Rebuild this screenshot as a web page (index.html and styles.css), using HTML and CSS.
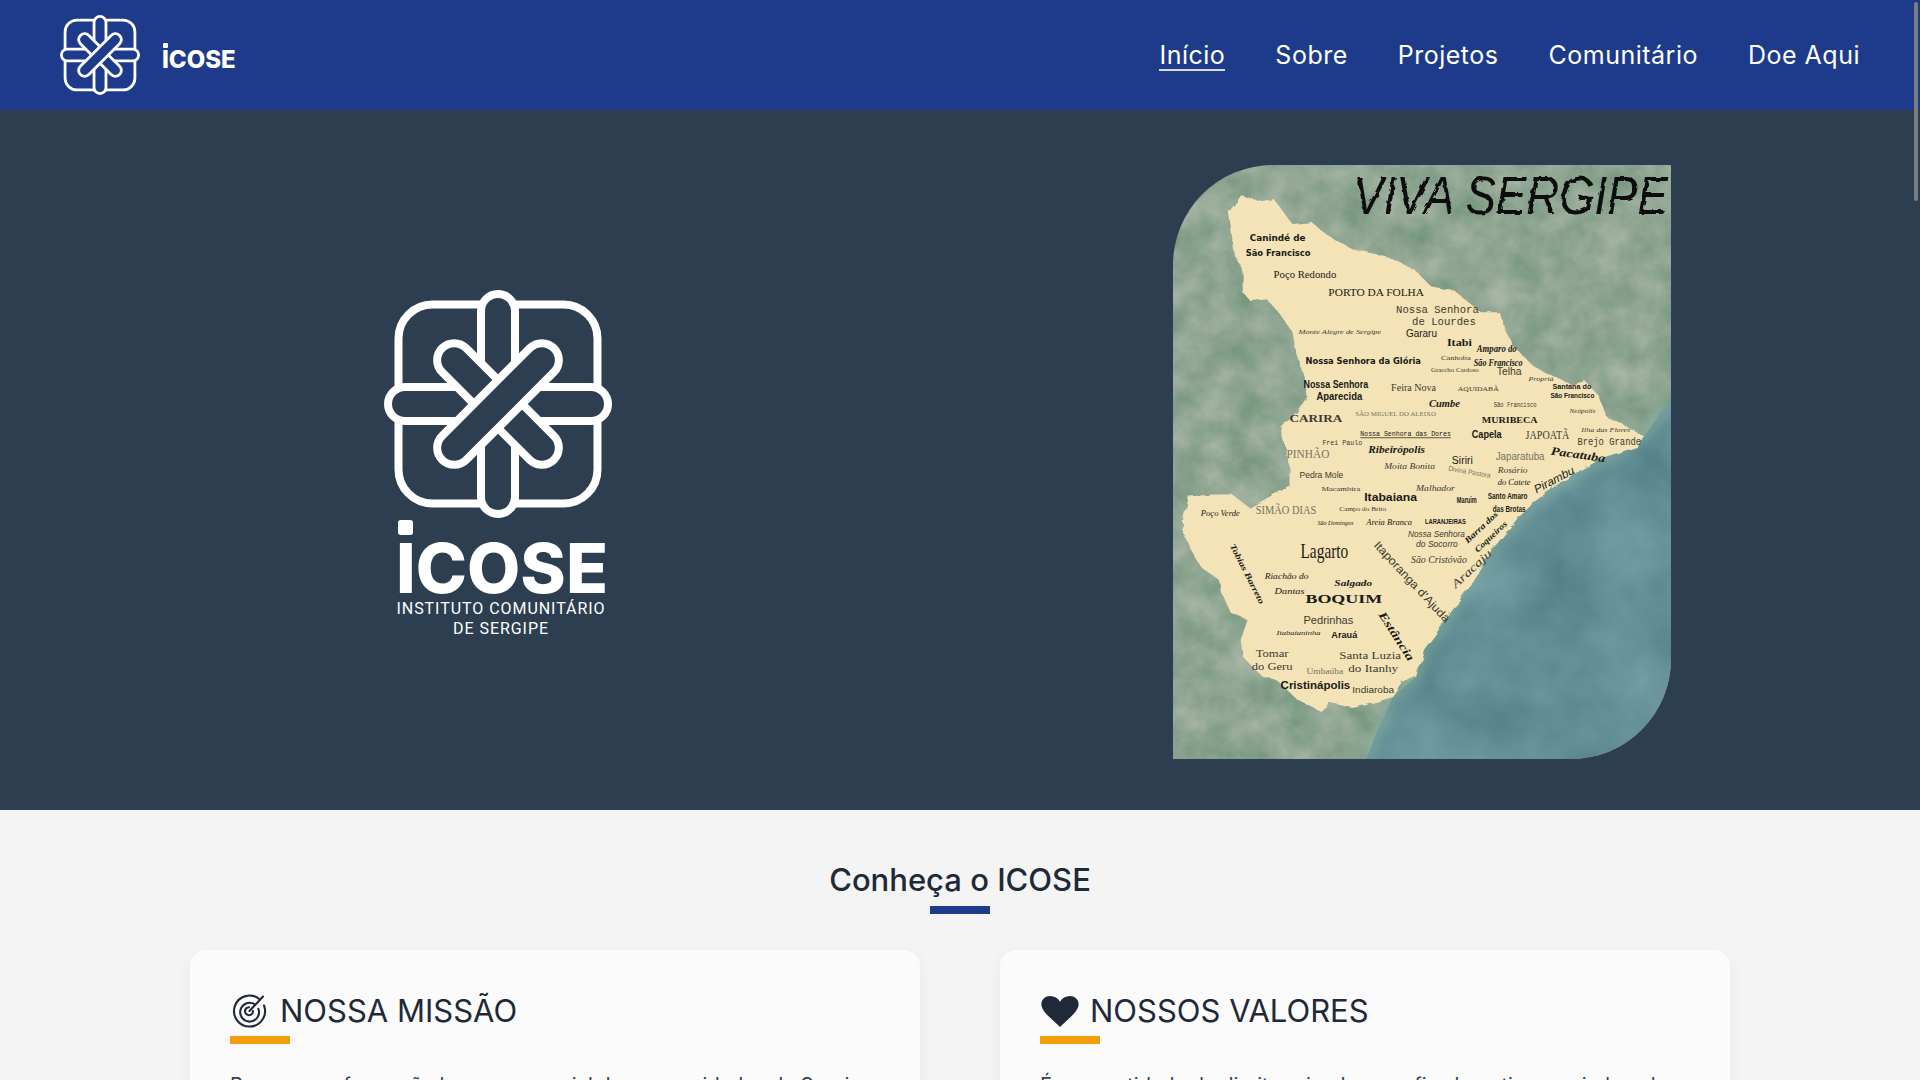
FILE: index.html
```html
<!DOCTYPE html>
<html lang="pt-BR">
<head>
<meta charset="utf-8">
<title>ICOSE - Instituto Comunitário de Sergipe</title>
<link rel="stylesheet" href="styles.css">
</head>
<body>
<svg class="defs" width="0" height="0" aria-hidden="true">
  <symbol id="mark" viewBox="-114 -114 228 228">
    <rect class="mark-shape" x="-99.5" y="-99.5" width="199" height="199" rx="34"/>
    <rect class="mark-shape" x="-17" y="-110" width="34" height="220" rx="17"/>
    <rect class="mark-shape" x="-110" y="-17" width="220" height="34" rx="17"/>
    <rect class="mark-shape" x="-17" y="-79" width="34" height="158" rx="17" transform="rotate(-45)"/>
    <rect class="mark-shape" x="-17" y="-79" width="34" height="158" rx="17" transform="rotate(45)"/>
  </symbol>
</svg>

<header class="topbar">
  <a class="brand" href="#">
    <svg class="brand-mark"><use href="#mark"/></svg>
    <span class="wordmark wordmark-small"><span class="wordmark-i">I</span>COSE</span>
  </a>
  <nav class="nav">
    <a class="nav-link is-active" href="#">Início</a>
    <a class="nav-link" href="#">Sobre</a>
    <a class="nav-link" href="#">Projetos</a>
    <a class="nav-link" href="#">Comunitário</a>
    <a class="nav-link" href="#">Doe Aqui</a>
  </nav>
</header>

<section class="hero">
  <div class="hero-logo">
    <svg class="hero-mark"><use href="#mark"/></svg>
    <span class="wordmark wordmark-large"><span class="wordmark-i">I</span>COSE</span>
    <span class="hero-sub">INSTITUTO COMUNITÁRIO<br>DE SERGIPE</span>
  </div>
  <div class="hero-map">
    <svg class="map" viewBox="0 0 500 593" preserveAspectRatio="none" role="img" aria-label="Mapa Viva Sergipe">
      <defs>
        <filter id="sat" x="0" y="0" width="100%" height="100%" color-interpolation-filters="sRGB">
          <feTurbulence type="fractalNoise" baseFrequency="0.035" numOctaves="6" seed="11"/>
          <feColorMatrix values="0.26 0 0 0 0.43  0.16 0 0 0 0.57  0.2 0 0 0 0.47  0 0 0 0 1"/>
        </filter>
        <filter id="sea" x="0" y="0" width="100%" height="100%" color-interpolation-filters="sRGB">
          <feTurbulence type="fractalNoise" baseFrequency="0.014" numOctaves="4" seed="5"/>
          <feColorMatrix values="0.18 0 0 0 0.3  0.16 0 0 0 0.48  0.16 0 0 0 0.51  0 0 0 0 1"/>
          <feComposite in2="SourceAlpha" operator="in"/>
        </filter>
        <filter id="rough" x="-5%" y="-5%" width="110%" height="110%">
          <feTurbulence type="fractalNoise" baseFrequency="0.09" numOctaves="3" seed="3"/>
          <feDisplacementMap in="SourceGraphic" scale="5"/>
        </filter>
        <filter id="brush" x="-5%" y="-20%" width="110%" height="140%">
          <feTurbulence type="fractalNoise" baseFrequency="0.12" numOctaves="2" seed="8"/>
          <feDisplacementMap in="SourceGraphic" scale="4"/>
        </filter>
        <filter id="soft"><feGaussianBlur stdDeviation="6"/></filter>
      </defs>
      <rect class="map-land-bg" width="500" height="593"/>
      <path class="map-sea" d="M500 232L473 271L435 291L410 304L383 321L362 337L345 354L318 387L297 421L283 441L269 461L252 484L244 511L221 531L205 565L194 593L500 593Z"/>
      <path class="map-shore" d="M500 232L473 271L435 291L410 304L383 321L362 337L345 354L318 387L297 421L283 441L269 461L252 484L244 511L221 531L205 565L194 593"/>
      <path class="map-state" d="M68 31L90 36L101 34L120 59L139 57L156 71L180 84L214 91L242 104L259 121L283 126L309 147L328 147L333 164L342 181L362 201L383 212L400 219L414 216L428 231L435 251L455 261L473 271L467 281L435 291L410 304L383 321L362 337L345 354L318 387L297 421L283 441L269 461L252 484L244 511L231 517L221 531L194 539L180 542L159 537L149 546L125 534L104 514L90 511L70 491L68 474L75 454L58 447L49 427L46 414L28 401L18 384L10 367L10 354L16 331L39 329L59 329L77 342L101 329L118 321L118 304L114 291L108 261L128 241L135 231L132 211L123 184L120 167L106 147L94 134L78 136L70 127L70 107L61 84L56 47Z"/>

      <text class="m-title" x="181" y="49" textLength="316" lengthAdjust="spacingAndGlyphs">VIVA SERGIPE</text>

      <text class="m-round" x="77" y="76" textLength="56" lengthAdjust="spacingAndGlyphs">Canindé de</text>
      <text class="m-round" x="73" y="91" textLength="65" lengthAdjust="spacingAndGlyphs">São Francisco</text>
      <text class="m-serif" x="101" y="113" textLength="63" lengthAdjust="spacingAndGlyphs">Poço Redondo</text>
      <text class="m-serif" x="156" y="131" textLength="96" lengthAdjust="spacingAndGlyphs">PORTO DA FOLHA</text>
      <text class="m-mono m-soft" x="224" y="148" textLength="83" lengthAdjust="spacingAndGlyphs">Nossa Senhora</text>
      <text class="m-mono m-soft" x="240" y="160" textLength="64" lengthAdjust="spacingAndGlyphs">de Lourdes</text>
      <text class="m-sans" x="234" y="172" textLength="31" lengthAdjust="spacingAndGlyphs">Gararu</text>
      <text class="m-script m-tiny m-soft" x="126" y="169" textLength="83" lengthAdjust="spacingAndGlyphs">Monte Alegre de Sergipe</text>
      <text class="m-serif m-strong" x="275" y="181" textLength="25" lengthAdjust="spacingAndGlyphs">Itabi</text>
      <text class="m-script m-strong" x="305" y="187" textLength="40" lengthAdjust="spacingAndGlyphs">Amparo do</text>
      <text class="m-script m-strong" x="302" y="201" textLength="49" lengthAdjust="spacingAndGlyphs">São Francisco</text>
      <text class="m-round" x="133" y="199" textLength="116" lengthAdjust="spacingAndGlyphs">Nossa Senhora da Glória</text>
      <text class="m-serif m-tiny m-soft" x="269" y="195" textLength="30" lengthAdjust="spacingAndGlyphs">Canhoba</text>
      <text class="m-serif m-tiny m-soft" x="259" y="207" textLength="48" lengthAdjust="spacingAndGlyphs">Graccho Cardoso</text>
      <text class="m-sans m-soft" x="325" y="210" textLength="25" lengthAdjust="spacingAndGlyphs">Telha</text>
      <text class="m-script m-tiny m-soft" x="357" y="216" textLength="25" lengthAdjust="spacingAndGlyphs">Propriá</text>
      <text class="m-sans m-tiny m-mid" x="381" y="224" textLength="39" lengthAdjust="spacingAndGlyphs">Santana do</text>
      <text class="m-sans m-tiny m-mid" x="379" y="233" textLength="44" lengthAdjust="spacingAndGlyphs">São Francisco</text>
      <text class="m-sans m-mid" x="131" y="223" textLength="65" lengthAdjust="spacingAndGlyphs">Nossa Senhora</text>
      <text class="m-sans m-mid" x="144" y="235" textLength="46" lengthAdjust="spacingAndGlyphs">Aparecida</text>
      <text class="m-serif m-soft" x="219" y="226" textLength="45" lengthAdjust="spacingAndGlyphs">Feira Nova</text>
      <text class="m-serif m-tiny m-soft" x="286" y="226" textLength="41" lengthAdjust="spacingAndGlyphs">AQUIDABÃ</text>
      <text class="m-script m-strong" x="257" y="242" textLength="31" lengthAdjust="spacingAndGlyphs">Cumbe</text>
      <text class="m-mono m-tiny m-soft" x="322" y="242" textLength="43" lengthAdjust="spacingAndGlyphs">São Francisco</text>
      <text class="m-script m-tiny m-soft" x="398" y="248" textLength="26" lengthAdjust="spacingAndGlyphs">Neópolis</text>
      <text class="m-serif m-strong m-soft" x="117" y="257" textLength="53" lengthAdjust="spacingAndGlyphs">CARIRA</text>
      <text class="m-serif m-tiny m-faint" x="183" y="251" textLength="81" lengthAdjust="spacingAndGlyphs">SÃO MIGUEL DO ALEIXO</text>
      <text class="m-serif m-strong m-small" x="310" y="258" textLength="56" lengthAdjust="spacingAndGlyphs">MURIBECA</text>
      <text class="m-mono m-tiny m-line" x="188" y="271" textLength="91" lengthAdjust="spacingAndGlyphs">Nossa Senhora das Dores</text>
      <text class="m-sans m-mid" x="300" y="273" textLength="30" lengthAdjust="spacingAndGlyphs">Capela</text>
      <text class="m-serif m-large m-soft" x="354" y="274" textLength="44" lengthAdjust="spacingAndGlyphs">JAPOATÃ</text>
      <text class="m-script m-tiny m-soft" x="410" y="267" textLength="49" lengthAdjust="spacingAndGlyphs">Ilha das Flores</text>
      <text class="m-mono m-soft" x="406" y="280" textLength="64" lengthAdjust="spacingAndGlyphs">Brejo Grande</text>
      <text class="m-mono m-tiny m-soft" x="150" y="280" textLength="40" lengthAdjust="spacingAndGlyphs">Frei Paulo</text>
      <text class="m-script m-strong" x="196" y="288" textLength="57" lengthAdjust="spacingAndGlyphs">Ribeirópolis</text>
      <text class="m-serif m-large m-faint" x="114" y="293" textLength="43" lengthAdjust="spacingAndGlyphs">PINHÃO</text>
      <text class="m-script m-strong m-large" transform="translate(379 289) rotate(8)" textLength="55" lengthAdjust="spacingAndGlyphs">Pacatuba</text>

      <text class="m-sans" x="280" y="299" textLength="21" lengthAdjust="spacingAndGlyphs">Siriri</text>
      <text class="m-sans m-faint" x="324" y="295" textLength="49" lengthAdjust="spacingAndGlyphs">Japaratuba</text>
      <text class="m-script m-small m-soft" x="212" y="303" textLength="51" lengthAdjust="spacingAndGlyphs">Moita Bonita</text>
      <text class="m-sans m-small m-soft" x="127" y="312" textLength="44" lengthAdjust="spacingAndGlyphs">Pedra Mole</text>
      <text class="m-sans m-tiny m-faint" transform="translate(276 305) rotate(10)" textLength="43" lengthAdjust="spacingAndGlyphs">Divina Pastora</text>
      <text class="m-script m-small m-soft" x="326" y="307" textLength="30" lengthAdjust="spacingAndGlyphs">Rosário</text>
      <text class="m-script m-small" x="326" y="319" textLength="33" lengthAdjust="spacingAndGlyphs">do Catete</text>
      <text class="m-oblique m-large" transform="translate(365 328) rotate(-28)" textLength="44" lengthAdjust="spacingAndGlyphs">Pirambu</text>
      <text class="m-serif m-tiny m-soft" x="149" y="325" textLength="39" lengthAdjust="spacingAndGlyphs">Macambira</text>
      <text class="m-script m-small m-soft" x="244" y="325" textLength="39" lengthAdjust="spacingAndGlyphs">Malhador</text>
      <text class="m-sans m-strong m-large" x="192" y="335" textLength="53" lengthAdjust="spacingAndGlyphs">Itabaiana</text>
      <text class="m-sans m-small m-mid" x="316" y="333" textLength="40" lengthAdjust="spacingAndGlyphs">Santo Amaro</text>
      <text class="m-sans m-small m-mid" x="321" y="346" textLength="33" lengthAdjust="spacingAndGlyphs">das Brotas</text>
      <text class="m-sans m-small m-strong" x="285" y="337" textLength="20" lengthAdjust="spacingAndGlyphs">Maruim</text>
      <text class="m-script m-small" x="28" y="350" textLength="39" lengthAdjust="spacingAndGlyphs">Poço Verde</text>
      <text class="m-serif m-large m-faint" x="83" y="348" textLength="61" lengthAdjust="spacingAndGlyphs">SIMÃO DIAS</text>
      <text class="m-serif m-tiny m-soft" x="167" y="345" textLength="47" lengthAdjust="spacingAndGlyphs">Campo do Brito</text>
      <text class="m-script m-tiny" x="145" y="359" textLength="36" lengthAdjust="spacingAndGlyphs">São Domingos</text>
      <text class="m-script m-small" x="194" y="359" textLength="46" lengthAdjust="spacingAndGlyphs">Areia Branca</text>
      <text class="m-sans m-tiny m-strong" x="253" y="358" textLength="41" lengthAdjust="spacingAndGlyphs">LARANJEIRAS</text>
      <text class="m-oblique m-small m-soft" x="236" y="371" textLength="57" lengthAdjust="spacingAndGlyphs">Nossa Senhora</text>
      <text class="m-oblique m-small m-soft" x="244" y="381" textLength="42" lengthAdjust="spacingAndGlyphs">do Socorro</text>
      <text class="m-script m-small m-strong" transform="translate(296 378) rotate(-43)" textLength="42" lengthAdjust="spacingAndGlyphs">Barra dos</text>
      <text class="m-script m-small m-strong" transform="translate(306 387) rotate(-43)" textLength="41" lengthAdjust="spacingAndGlyphs">Coqueiros</text>
      <text class="m-serif m-huge" x="128" y="392" textLength="48" lengthAdjust="spacingAndGlyphs">Lagarto</text>
      <text class="m-sans m-large m-soft" transform="translate(201 380) rotate(47)" textLength="106" lengthAdjust="spacingAndGlyphs">Itaporanga d'Ajuda</text>
      <text class="m-script m-soft" x="239" y="397" textLength="56" lengthAdjust="spacingAndGlyphs">São Cristóvão</text>
      <text class="m-script m-strong m-small" transform="translate(57 380) rotate(63)" textLength="66" lengthAdjust="spacingAndGlyphs">Tobias Barreto</text>
      <text class="m-script m-large m-soft" transform="translate(284 423) rotate(-43)" textLength="50" lengthAdjust="spacingAndGlyphs">Aracaju</text>
      <text class="m-script m-small" x="92" y="413" textLength="44" lengthAdjust="spacingAndGlyphs">Riachão do</text>
      <text class="m-script m-small" x="102" y="428" textLength="30" lengthAdjust="spacingAndGlyphs">Dantas</text>
      <text class="m-script m-strong m-small" x="162" y="420" textLength="38" lengthAdjust="spacingAndGlyphs">Salgado</text>
      <text class="m-serif m-strong m-large" x="133" y="437" textLength="77" lengthAdjust="spacingAndGlyphs">BOQUIM</text>
      <text class="m-sans m-soft" x="131" y="458" textLength="50" lengthAdjust="spacingAndGlyphs">Pedrinhas</text>
      <text class="m-script m-strong m-large" transform="translate(206 449) rotate(57)" textLength="56" lengthAdjust="spacingAndGlyphs">Estância</text>
      <text class="m-script m-tiny" x="104" y="469" textLength="44" lengthAdjust="spacingAndGlyphs">Itabaianinha</text>
      <text class="m-sans m-small m-strong" x="159" y="472" textLength="26" lengthAdjust="spacingAndGlyphs">Arauá</text>
      <text class="m-serif m-soft" x="83" y="491" textLength="33" lengthAdjust="spacingAndGlyphs">Tomar</text>
      <text class="m-serif m-soft" x="79" y="504" textLength="41" lengthAdjust="spacingAndGlyphs">do Geru</text>
      <text class="m-serif m-soft" x="167" y="493" textLength="62" lengthAdjust="spacingAndGlyphs">Santa Luzia</text>
      <text class="m-serif m-soft" x="176" y="506" textLength="50" lengthAdjust="spacingAndGlyphs">do Itanhy</text>
      <text class="m-serif m-small m-faint" x="134" y="508" textLength="37" lengthAdjust="spacingAndGlyphs">Umbaúba</text>
      <text class="m-sans m-mid" x="108" y="523" textLength="70" lengthAdjust="spacingAndGlyphs">Cristinápolis</text>
      <text class="m-sans m-small m-soft" x="180" y="527" textLength="42" lengthAdjust="spacingAndGlyphs">Indiaroba</text>
    </svg>
  </div>
</section>

<main class="about">
  <h2 class="about-title">Conheça o ICOSE</h2>
  <div class="about-bar"></div>
  <div class="about-grid">
    <article class="card">
      <h3 class="card-title">
        <svg class="card-icon" viewBox="0 0 36 34" aria-hidden="true">
          <path class="icon-line" d="M27.5 5.2A15.5 15.5 0 1 0 32 11.5M22.6 10.2A9.4 9.4 0 1 0 26.4 14.8M17 13.2A4 4 0 1 0 21 17"/>
          <path class="icon-line" d="M17.5 17L31 2.5"/>
        </svg>
        NOSSA MISSÃO
      </h3>
      <div class="card-bar"></div>
      <p class="card-text">Promover a formação humana e social das comunidades de Sergipe, fortalecendo a cidadania, a cultura e o desenvolvimento local por meio de projetos comunitários.</p>
    </article>
    <article class="card">
      <h3 class="card-title">
        <svg class="card-icon card-icon-heart" viewBox="0 0 36 30" aria-hidden="true">
          <path class="icon-fill" d="M18 30C9 21 0 15 0 8C0 3 4 0 8.500 0C12.500 0 16 2 18 5.500C20 2 23.500 0 27.500 0C32 0 36 3 36 8C36 15 27 21 18 30Z"/>
        </svg>
        NOSSOS VALORES
      </h3>
      <div class="card-bar"></div>
      <p class="card-text">É uma entidade de direito privado, sem fins lucrativos, guiada pela ética, pela transparência, pela solidariedade e pelo compromisso com as pessoas.</p>
    </article>
  </div>
</main>

<div class="scroll-thumb"></div>
</body>
</html>
```
FILE: styles.css
```css
* { box-sizing: border-box; }
html { scrollbar-width: none; }
body {
  margin: 0;
  font-family: Inter, "Liberation Sans", sans-serif;
  color: #1f2937;
  background: #f4f4f4;
}
.defs { position: absolute; }
.mark-shape { fill: var(--mark-bg); stroke: #fff; stroke-width: 8; }

.topbar {
  --mark-bg: #1e3a8a;
  height: 110px;
  padding: 0 60px;
  background: #1e3a8a;
  display: flex;
  align-items: center;
  justify-content: space-between;
}
.brand { display: flex; align-items: center; gap: 22px; text-decoration: none; }
.brand-mark { width: 80px; height: 80px; display: block; }

.wordmark {
  color: #fff;
  font-weight: 800;
  display: block;
}
.wordmark-small { font-size: 24px; line-height: 1; margin-top: 10px; }
.wordmark-large { font-size: 69px; line-height: 0.9; margin-top: 19px; margin-left: 8px; }
.wordmark-i { position: relative; }
.wordmark-i::before {
  content: "";
  position: absolute;
  left: 50%;
  top: -0.08em;
  width: 0.22em;
  height: 0.21em;
  margin-left: -0.11em;
  border-radius: 0.04em;
  background: #fff;
}

.nav { display: flex; gap: 50px; align-items: center; }
.nav-link {
  color: #fff;
  font-size: 25px;
  line-height: 28px;
  text-decoration: none;
  letter-spacing: 0.02em;
  border-bottom: 2px solid transparent;
  padding: 2px 0 0;
}
.nav-link.is-active { border-bottom-color: #d9dbe8; }

.hero {
  --mark-bg: #2c3e50;
  height: 700px;
  padding: 0 60px;
  background: #2c3e50;
  display: grid;
  grid-template-columns: 1fr 1fr;
  gap: 48px;
  align-items: center;
  justify-items: center;
}
.hero-logo { display: flex; flex-direction: column; align-items: center; margin-top: 9px; }
.hero-mark { width: 228px; height: 228px; display: block; }
.hero-sub {
  color: #fff;
  font-family: Roboto, sans-serif;
  font-size: 16px;
  line-height: 20px;
  letter-spacing: 0.95px;
  text-align: center;
  margin-left: 6px;
}
.hero-map {
  width: 498px;
  height: 594px;
  margin-top: 3px;
  border-radius: 100px 0 100px 0;
  overflow: hidden;
}
.map { display: block; width: 498px; height: 594px; }
.map-land-bg { filter: url(#sat); }
.map-sea { filter: url(#sea); }
.map-shore { fill: none; stroke: #88b0a2; stroke-width: 12; opacity: 0.6; filter: url(#soft); }
.map-state { fill: #f3e3b7; filter: url(#rough); }
.map text { fill: #1a1a16; font-size: 10px; }
.map .m-title {
  font-family: "Liberation Sans", sans-serif;
  font-style: italic;
  font-size: 54px;
  fill: #0c0c0a;
  filter: url(#brush);
}
.map .m-round { font-family: "DejaVu Sans", sans-serif; font-weight: 700; font-size: 9px; }
.map .m-serif { font-family: "Liberation Serif", serif; }
.map .m-sans { font-family: "Liberation Sans", sans-serif; }
.map .m-mono { font-family: "Liberation Mono", monospace; }
.map .m-script { font-family: "Liberation Serif", serif; font-style: italic; }
.map .m-oblique { font-family: "Liberation Sans", sans-serif; font-style: italic; }
.map .m-strong { font-weight: 700; }
.map .m-mid { font-weight: 600; }
.map .m-soft { fill: #3d3a30; }
.map .m-faint { fill: #77735f; }
.map .m-tiny { font-size: 7px; }
.map .m-small { font-size: 8.500px; }
.map .m-large { font-size: 11.500px; }
.map .m-huge { font-size: 20px; }
.map .m-line { text-decoration: underline; }

.about { padding: 50px 190px 60px; background: #f4f4f4; }
.about-title {
  margin: 0;
  font-size: 31px;
  line-height: 40px;
  font-weight: 500;
  text-align: center;
}
.about-bar { width: 60px; height: 8px; margin: 6px auto 36px; background: #1e3a8a; }
.about-grid { display: grid; grid-template-columns: 1fr 1fr; gap: 80px; }
.card {
  padding: 40px;
  background: #fbfbfb;
  border-radius: 16px;
  box-shadow: 0 4px 16px rgba(0, 0, 0, 0.05);
}
.card-title {
  margin: 0;
  display: flex;
  align-items: center;
  gap: 10px;
  font-size: 31px;
  line-height: 42px;
  font-weight: 400;
}
.card-icon { width: 40px; height: 34px; flex: none; }
.card-icon-heart { width: 40px; height: 31px; }
.icon-line { fill: none; stroke: #1f2937; stroke-width: 2.1; stroke-linecap: round; }
.icon-fill { fill: #1f2937; }
.card-bar { width: 60px; height: 8px; margin-top: 4px; background: #f59e0b; }
.card-text { margin: 25px 0 0; font-size: 20px; line-height: 32px; color: #374151; }

.scroll-thumb {
  position: fixed;
  top: 2px;
  right: 2px;
  width: 4px;
  height: 199px;
  background: #7b7d84;
  border-radius: 2px;
}
```
